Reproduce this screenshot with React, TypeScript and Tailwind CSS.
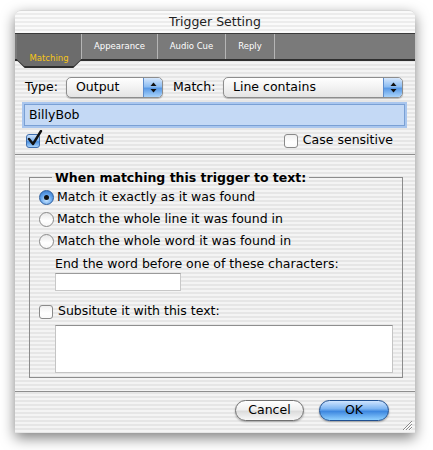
import React from 'react';

const stripes =
  'bg-[repeating-linear-gradient(180deg,#f4f4f4_0px,#f4f4f4_2px,#e6e6e6_2px,#e6e6e6_4px)]';

const PopupArrows: React.FC = () => (
  <span className="w-[19px] h-full rounded-r-[4px] border-l border-[#5d8ccc] bg-[linear-gradient(180deg,#d6e7fc_0%,#8dbdf2_45%,#5a9ae6_55%,#a9d3fb_100%)] flex items-center justify-center">
    <svg width="7" height="11" viewBox="0 0 7 11">
      <path d="M3.5 0.5 L6.5 4 L0.5 4 Z" fill="#111" />
      <path d="M0.5 7 L6.5 7 L3.5 10.5 Z" fill="#111" />
    </svg>
  </span>
);

const Popup: React.FC<{ label: string; width: string }> = ({ label, width }) => (
  <div
    className={`${width} h-[21px] rounded-[5px] border border-[#8d8d8d] bg-[linear-gradient(180deg,#ffffff_0%,#f2f2f2_50%,#e4e4e4_100%)] shadow-[0_1px_1px_rgba(0,0,0,0.25)] flex items-center overflow-hidden`}
  >
    <span className="flex-1 pl-[9px] leading-none">{label}</span>
    <PopupArrows />
  </div>
);

const CheckBox: React.FC<{ checked?: boolean }> = ({ checked }) => (
  <span className="relative w-[14px] h-[14px] shrink-0">
    <span
      className={`absolute left-0 top-[1px] w-[14px] h-[14px] rounded-[3px] border ${
        checked
          ? 'border-[#3f6eae] bg-[linear-gradient(180deg,#cfe3fb_0%,#79b0ee_50%,#4a8fe0_55%,#a6d2fb_100%)]'
          : 'border-[#8a8a8a] bg-[linear-gradient(180deg,#f0f0f0_0%,#ffffff_60%,#fafafa_100%)]'
      }`}
    />
    {checked && (
      <svg className="absolute left-[1px] top-[-3px]" width="16" height="17" viewBox="0 0 16 17">
        <path d="M2 9 L6 14 L14 1" fill="none" stroke="#111" strokeWidth="2.4" strokeLinecap="round" strokeLinejoin="round" />
      </svg>
    )}
  </span>
);

const Radio: React.FC<{ checked?: boolean }> = ({ checked }) =>
  checked ? (
    <span className="w-[15px] h-[15px] rounded-full border border-[#2e5f9e] bg-[radial-gradient(circle_at_50%_70%,#c9e6ff_0%,#5d9ee8_55%,#2f6fc0_100%)] flex items-center justify-center shrink-0">
      <span className="w-[5px] h-[5px] rounded-full bg-[#111]" />
    </span>
  ) : (
    <span className="w-[15px] h-[15px] rounded-full border border-[#8a8a8a] bg-[linear-gradient(180deg,#e8e8e8_0%,#ffffff_60%,#f6f6f6_100%)] shrink-0" />
  );

const Tab: React.FC<{ label: string; width: string }> = ({ label, width }) => (
  <div className={`${width} h-full flex items-center justify-center border-r border-[#b5b5b5] text-white text-[8.5px]`}>
    {label}
  </div>
);

export default function App() {
  return (
    <div className="w-[433px] h-[450px] bg-white pt-[10px] pl-[15px] font-['Lucida_Grande','DejaVu_Sans',sans-serif] text-[12.5px] text-black">
      <div className={`relative w-[400px] h-[423px] flex flex-col rounded-t-[6px] ${stripes} shadow-[0_5px_14px_rgba(0,0,0,0.5)]`}>
        {/* title bar */}
        <div className="h-[23px] rounded-t-[6px] bg-[repeating-linear-gradient(180deg,#fafafa_0px,#fafafa_2px,#ececec_2px,#ececec_4px)] border-t border-[#d8d8d8] flex items-center justify-center text-[#222]">
          Trigger Setting
        </div>

        {/* tabs */}
        <div className="relative h-[28px] bg-[#7a7a7a] border-t border-[#3a3a3a] border-b-2 border-b-[#2e2e2e] flex">
          <div className="relative z-10 w-[64px] h-[34px] mb-[-8px] ml-[2px] bg-[#2e2e2e] [clip-path:polygon(0_0,100%_0,100%_78%,88%_100%,12%_100%,0_78%)]">
            <div className="absolute inset-x-0 top-0 bottom-[2px] bg-[#6c6c6c] [clip-path:polygon(0_0,100%_0,100%_80%,89%_100%,11%_100%,0_80%)] flex items-end justify-center pb-[1px] text-[#f5c518] text-[8.5px]">
              Matching
            </div>
          </div>
          <div className="w-px bg-[#b5b5b5]" />
          <Tab label="Appearance" width="w-[76px]" />
          <Tab label="Audio Cue" width="w-[68px]" />
          <Tab label="Reply" width="w-[49px]" />
        </div>

        {/* content */}
        <div className="flex-1 flex flex-col">
          <div className="pl-[9px] pr-[10px] pt-[16px]">
            <div className="flex items-center">
              <span className="w-[42px] pl-[1px]">Type:</span>
              <Popup label="Output" width="w-[97px]" />
              <span className="ml-[10px] w-[50px]">Match:</span>
              <Popup label="Line contains" width="w-[180px]" />
            </div>
            <div className="mt-[6px] h-[22px] border border-[#7aa0d4] bg-[#c4d9f5] shadow-[0_0_0_2px_#a9c6ee] flex items-center pl-[4px]">
              BillyBob
            </div>
            <div className="mt-[5px] h-[18px] flex items-center pr-[12px]">
              <span className="ml-[2px] flex items-center gap-[5px]">
                <CheckBox checked />
                Activated
              </span>
              <span className="ml-auto flex items-center gap-[5px]">
                <CheckBox />
                Case sensitive
              </span>
            </div>
          </div>

          <div className="mt-[5px] h-px bg-[#8e8e8e]" />

          <fieldset className="mt-[14px] ml-[14px] mr-[12px] h-[209px] border border-[#8c8c8c] px-[9px] pb-0">
            <legend className="ml-[13px] px-[3px] font-bold leading-[17px]">
              When matching this trigger to text:
            </legend>
            <div className="mt-[3px] flex flex-col gap-[6px]">
              <label className="flex items-center gap-[3px] h-[16px]">
                <Radio checked />
                Match it exactly as it was found
              </label>
              <label className="flex items-center gap-[3px] h-[16px]">
                <Radio />
                Match the whole line it was found in
              </label>
              <label className="flex items-center gap-[3px] h-[16px]">
                <Radio />
                Match the whole word it was found in
              </label>
            </div>
            <div className="pl-[16px] mt-[7px]">
              <div className="h-[16px] leading-[16px]">End the word before one of these characters:</div>
              <div className="mt-[1px] w-[126px] h-[18px] bg-white border border-[#c8c8c8] border-t-[#9a9a9a]" />
            </div>
            <label className="mt-[12px] flex items-center gap-[5px] h-[16px]">
              <CheckBox />
              Subsitute it with this text:
            </label>
            <div className="mt-[6px] ml-[16px] w-[338px] h-[48px] bg-white border border-[#c4c4c4] border-t-[#8e8e8e]" />
          </fieldset>

          <div className="mt-[13px] h-px bg-[#8e8e8e]" />

          <div className="flex justify-end gap-[15px] pr-[26px] pt-[8px]">
            <button className="w-[69px] h-[21px] rounded-full border border-[#707070] bg-[linear-gradient(180deg,#ffffff_0%,#f0f0f0_45%,#dcdcdc_55%,#f8f8f8_100%)] shadow-[0_1px_2px_rgba(0,0,0,0.3)] leading-none">
              Cancel
            </button>
            <button className="w-[70px] h-[21px] rounded-full border border-[#1f4f8f] bg-[linear-gradient(180deg,#cfe5ff_0%,#7fb6f2_40%,#3e88e0_55%,#8fd0ff_100%)] shadow-[0_1px_2px_rgba(0,0,0,0.35)] leading-none">
              OK
            </button>
          </div>
        </div>

        <svg className="absolute right-[2px] bottom-[2px]" width="12" height="12" viewBox="0 0 12 12">
          <path d="M11 2 L2 11 M11 5 L5 11 M11 8 L8 11" stroke="#8a8a8a" strokeWidth="1" />
          <path d="M11 3 L3 11 M11 6 L6 11 M11 9 L9 11" stroke="#ffffff" strokeWidth="1" />
        </svg>
      </div>
    </div>
  );
}
